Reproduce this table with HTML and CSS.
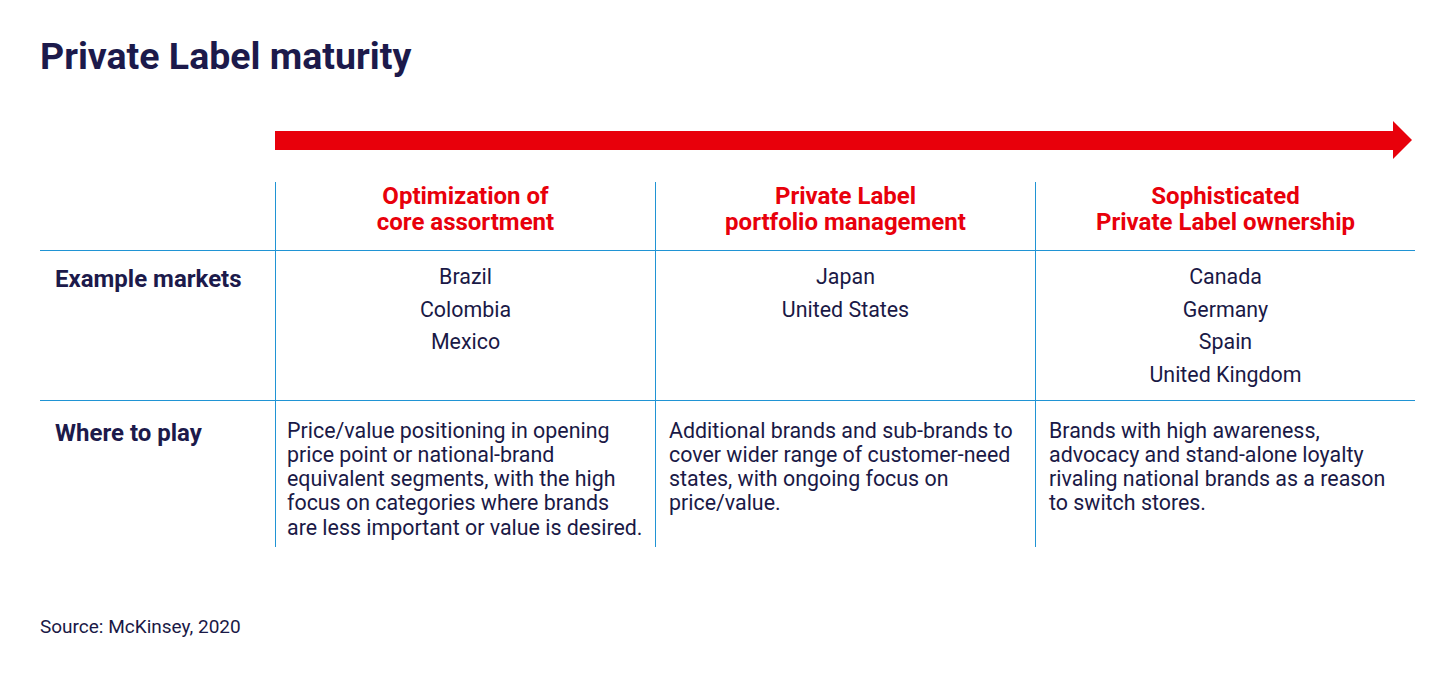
FILE: index.html
```html
<!DOCTYPE html>
<html lang="en">
<head>
<meta charset="utf-8">
<title>Private Label maturity</title>
<link rel="stylesheet" href="styles.css">
</head>
<body>
<main class="page">
  <h1 class="title">Private Label maturity</h1>
  <div class="arrow-row">
    <svg class="arrow" width="1137" height="38" viewBox="0 0 1137 38" aria-hidden="true">
      <rect x="0" y="10" width="1120" height="19" fill="#e8000b"/>
      <polygon points="1118,0 1137,19 1118,38" fill="#e8000b"/>
    </svg>
  </div>
  <div class="grid">
    <div class="cell head-empty"></div>
    <div class="cell head">Optimization of<br>core assortment</div>
    <div class="cell head">Private Label<br>portfolio management</div>
    <div class="cell head">Sophisticated<br>Private Label ownership</div>

    <div class="cell label markets-row">Example markets</div>
    <div class="cell markets markets-row">Brazil<br>Colombia<br>Mexico</div>
    <div class="cell markets markets-row">Japan<br>United States</div>
    <div class="cell markets markets-row">Canada<br>Germany<br>Spain<br>United Kingdom</div>

    <div class="cell label play-row">Where to play</div>
    <div class="cell play play-row pad-a">Price/value positioning in opening<br>price point or national-brand<br>equivalent segments, with the high<br>focus on categories where brands<br>are less important or value is desired.</div>
    <div class="cell play play-row pad-b">Additional brands and sub-brands to<br>cover wider range of customer-need<br>states, with ongoing focus on<br>price/value.</div>
    <div class="cell play play-row pad-b">Brands with high awareness,<br>advocacy and stand-alone loyalty<br>rivaling national brands as a reason<br>to switch stores.</div>
  </div>
  <p class="source">Source: McKinsey, 2020</p>
</main>
</body>
</html>
```

FILE: styles.css
```css
html, body {
  margin: 0;
  padding: 0;
  background: #ffffff;
}

body {
  font-family: Roboto, "Liberation Sans", Arial, sans-serif;
  color: #1a1946;
}

.page {
  padding: 0 40px;
}

.title {
  margin: 0;
  padding-top: 35px;
  font-size: 37.5px;
  line-height: 43px;
  font-weight: 700;
  color: #1c1a4b;
}

.arrow-row {
  margin-top: 43px;
  padding-left: 235px;
  height: 38px;
}

.arrow {
  display: block;
}

.grid {
  margin-top: 23px;
  display: grid;
  grid-template-columns: 235px 380px 380px 380px;
  grid-template-rows: 68px 150px 147px;
}

.cell {
  box-sizing: border-box;
  font-size: 21.4px;
}

.grid .cell:nth-child(4n+2),
.grid .cell:nth-child(4n+3),
.grid .cell:nth-child(4n+4) {
  border-left: 1.5px solid #2094d4;
}

.markets-row,
.play-row {
  border-top: 1.5px solid #2094d4;
}

.head {
  color: #e8000b;
  font-size: 24px;
  font-weight: 700;
  text-align: center;
  line-height: 26px;
  padding-top: 1px;
}

.label {
  font-size: 24px;
  font-weight: 700;
  padding-left: 15px;
  color: #1c1a4b;
}

.markets {
  text-align: center;
  line-height: 32.5px;
  padding-top: 10px;
}

.markets-row.label {
  line-height: 32.5px;
  padding-top: 12px;
}

.play {
  line-height: 24.3px;
  padding-top: 17.5px;
  white-space: nowrap;
}

.play-row.label {
  line-height: 24.3px;
  padding-top: 20px;
}

.pad-a {
  padding-left: 11px;
}

.pad-b {
  padding-left: 13px;
}

.source {
  margin: 69px 0 0;
  font-size: 19px;
  line-height: 21px;
}
```
